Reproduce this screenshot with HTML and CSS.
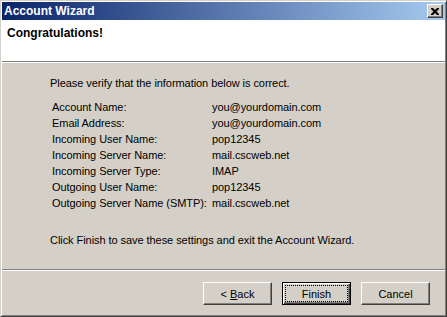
FILE: index.html
```html
<html>

<head>
    <title>Account Wizard</title>
    <link rel="stylesheet" href="styles.css">
</head>

<body>
    <div class="window">
        <div class="titlebar">
            <span class="title">Account Wizard</span>
            <span class="close">
                <svg width="8" height="7" viewBox="0 0 8 7">
                    <path d="M0 0h2l2 2 2-2h2v1l-2.5 2.5L8 6v1H6L4 5 2 7H0V6l2.5-2.5L0 1z" fill="#000"/>
                </svg>
            </span>
        </div>
        <div class="header">
            <h1>Congratulations!</h1>
        </div>
        <div class="page">
            <p class="intro">Please verify that the information below is correct.</p>
            <div class="summary">
                <span>Account Name:</span><span>you@yourdomain.com</span>
                <span>Email Address:</span><span>you@yourdomain.com</span>
                <span>Incoming User Name:</span><span>pop12345</span>
                <span>Incoming Server Name:</span><span>mail.cscweb.net</span>
                <span>Incoming Server Type:</span><span>IMAP</span>
                <span>Outgoing User Name:</span><span>pop12345</span>
                <span>Outgoing Server Name (SMTP):</span><span>mail.cscweb.net</span>
            </div>
            <p class="outro">Click Finish to save these settings and exit the Account Wizard.</p>
        </div>
        <div class="buttons">
            <button class="btn">&lt; <u>B</u>ack</button>
            <button class="btn default"><span class="focus">Finish</span></button>
            <button class="btn">Cancel</button>
        </div>
    </div>
</body>

</html>
```

FILE: styles.css
```css
body {
    margin: 0;
    font-family: "Liberation Sans", Arial, sans-serif;
    font-size: 11px;
    letter-spacing: -0.06px;
    color: #000;
}

.window {
    width: 447px;
    height: 317px;
    box-sizing: border-box;
    display: flex;
    flex-direction: column;
    padding: 1px;
    background: #d4d0c8;
    border: 1px solid;
    border-color: #d4d0c8 #404040 #404040 #d4d0c8;
    box-shadow: inset 1px 1px #fff, inset -1px -1px #808080;
}

.titlebar {
    height: 18px;
    display: flex;
    align-items: center;
    justify-content: space-between;
    padding: 0 2px;
    background: linear-gradient(to right, #0a246a, #a6caf0);
}

.title {
    color: #fff;
    font-size: 12px;
    font-weight: bold;
    letter-spacing: 0;
}

.close {
    width: 16px;
    height: 14px;
    box-sizing: border-box;
    display: flex;
    align-items: center;
    justify-content: center;
    background: #d4d0c8;
    border: 1px solid;
    border-color: #fff #404040 #404040 #fff;
    box-shadow: inset -1px -1px #808080;
}

.header {
    height: 41px;
    background: #fff;
    border-bottom: 1px solid #808080;
}

.header h1 {
    margin: 0;
    padding: 7px 5px 0;
    font-size: 12px;
    font-weight: bold;
    line-height: 13px;
    letter-spacing: 0;
}

.page {
    flex: 1;
    display: flex;
    flex-direction: column;
    padding: 13px 0 0 48px;
    box-shadow: inset 0 1px #fff;
    line-height: 16px;
}

.page p {
    margin: 0;
}

.summary {
    display: grid;
    grid-template-columns: 160px auto;
    margin: 8px 0 0 2px;
}

.outro {
    margin-top: 21px !important;
}

.buttons {
    display: flex;
    justify-content: flex-end;
    gap: 10px;
    height: 46px;
    box-sizing: border-box;
    padding: 12px 15px 0 0;
    border-top: 1px solid #808080;
    box-shadow: inset 0 1px #fff;
}

.btn {
    width: 69px;
    height: 23px;
    padding: 0;
    font: inherit;
    color: #000;
    background: #d4d0c8;
    border: 1px solid;
    border-color: #fff #404040 #404040 #fff;
    box-shadow: inset -1px -1px #808080;
}

.btn.default {
    display: flex;
    padding: 1px;
    border: 1px solid #000;
    box-shadow: inset 1px 1px #fff, inset -1px -1px #404040, inset -2px -2px #808080;
}

.focus {
    flex: 1;
    display: flex;
    align-items: center;
    justify-content: center;
    margin: 2px;
    outline: 1px dotted #000;
}
```
